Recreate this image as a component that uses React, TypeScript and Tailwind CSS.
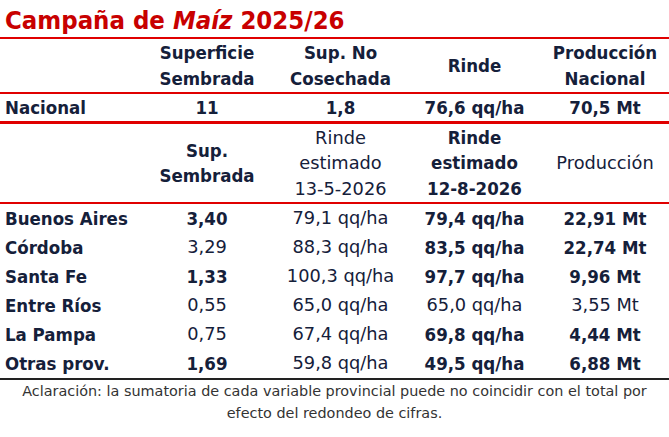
const cols = "grid grid-cols-[141px_132px_135px_133px_128px]";
const reg = "font-['DejaVu_Sans',sans-serif] font-normal text-[17.8px]";
const bld = "font-['DejaVu_Sans_Condensed','DejaVu_Sans',sans-serif] font-bold text-[18.5px]";

type Cell = { v: string; b?: boolean };

const rows: { name: string; cells: Cell[] }[] = [
  { name: "Buenos Aires", cells: [{ v: "3,40", b: true }, { v: "79,1 qq/ha" }, { v: "79,4 qq/ha", b: true }, { v: "22,91 Mt", b: true }] },
  { name: "Córdoba", cells: [{ v: "3,29" }, { v: "88,3 qq/ha" }, { v: "83,5 qq/ha", b: true }, { v: "22,74 Mt", b: true }] },
  { name: "Santa Fe", cells: [{ v: "1,33", b: true }, { v: "100,3 qq/ha" }, { v: "97,7 qq/ha", b: true }, { v: "9,96 Mt", b: true }] },
  { name: "Entre Ríos", cells: [{ v: "0,55" }, { v: "65,0 qq/ha" }, { v: "65,0 qq/ha" }, { v: "3,55 Mt" }] },
  { name: "La Pampa", cells: [{ v: "0,75" }, { v: "67,4 qq/ha" }, { v: "69,8 qq/ha", b: true }, { v: "4,44 Mt", b: true }] },
  { name: "Otras prov.", cells: [{ v: "1,69", b: true }, { v: "59,8 qq/ha" }, { v: "49,5 qq/ha", b: true }, { v: "6,88 Mt", b: true }] },
];

export default function App() {
  return (
    <div
      className="w-[669px] h-[437px] bg-white text-[#15203a] overflow-hidden"
      style={{ fontFamily: "'DejaVu Sans Condensed', 'DejaVu Sans', sans-serif" }}
    >
      {/* Title */}
      <div className="h-[37px] pl-[5px] flex items-end">
        <h1 className="text-[25.5px] leading-[34px] font-bold text-[#c80000]">
          Campaña de <span className="italic">Maíz</span> 2025/26
        </h1>
      </div>
      <div className="h-[2px] bg-[#e00000]" />

      {/* National header */}
      <div className={`${cols} h-[53px] leading-[26px] text-center items-center ${bld}`}>
        <div />
        <div>Superficie<br />Sembrada</div>
        <div>Sup. No<br />Cosechada</div>
        <div>Rinde</div>
        <div>Producción<br />Nacional</div>
      </div>
      <div className="h-[2px] bg-[#e00000]" />

      {/* National row */}
      <div className={`${cols} h-[27px] items-center text-center ${bld}`}>
        <div className="text-left pl-[5px]">Nacional</div>
        <div>11</div>
        <div>1,8</div>
        <div>76,6 qq/ha</div>
        <div>70,5 Mt</div>
      </div>
      <div className="h-[3px] bg-[#e00000]" />

      {/* Provincial header */}
      <div className={`${cols} h-[78px] leading-[25.5px] text-center items-center`}>
        <div />
        <div className={bld}>Sup.<br />Sembrada</div>
        <div className={reg}>Rinde<br />estimado<br />13-5-2026</div>
        <div className={bld}>Rinde<br />estimado<br />12-8-2026</div>
        <div className={reg}>Producción</div>
      </div>
      <div className="h-[2px] bg-[#e00000]" />

      {/* Provincial rows */}
      <div className="flex flex-col">
        {rows.map((r) => (
          <div key={r.name} className={`${cols} h-[29px] items-center text-center`}>
            <div className={`text-left pl-[5px] ${bld}`}>{r.name}</div>
            {r.cells.map((c, i) => (
              <div key={i} className={c.b ? bld : reg}>{c.v}</div>
            ))}
          </div>
        ))}
      </div>
      <div className="h-[2px] bg-[#222]" />

      {/* Footnote */}
      <p className="font-['DejaVu_Sans',sans-serif] text-[14.4px] leading-[22px] text-center text-[#333]">
        Aclaración: la sumatoria de cada variable provincial puede no coincidir con el total por
        <br />
        efecto del redondeo de cifras.
      </p>
    </div>
  );
}
